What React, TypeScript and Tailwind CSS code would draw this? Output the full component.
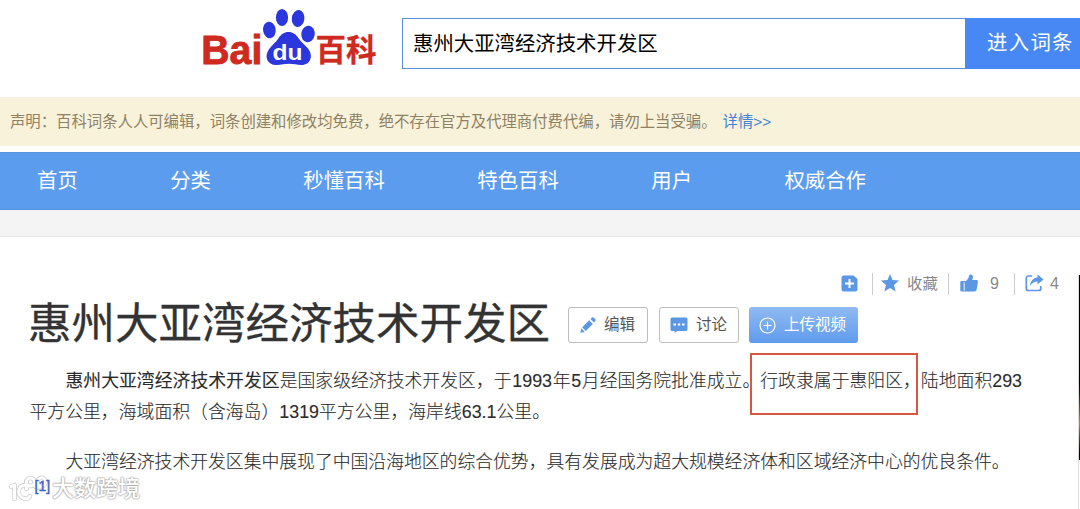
import React from "react";

const NAV = ["首页", "分类", "秒懂百科", "特色百科", "用户", "权威合作"];

function Logo() {
  return (
    <svg width="190" height="90" viewBox="190 0 190 90" className="block shrink-0 overflow-visible" aria-label="Baidu百科">
      <g fill="#cf2a20" stroke="#cf2a20" fontWeight="700">
        <text x="201.300" y="63.600" fontSize="41" strokeWidth="0.9" textLength="61" lengthAdjust="spacingAndGlyphs" fontFamily="'Liberation Sans', sans-serif">Bai</text>
        <text x="315.500" y="61" fontSize="30.500" strokeWidth="0.3" textLength="61" lengthAdjust="spacingAndGlyphs" fontFamily="'Noto Sans CJK SC', sans-serif">百科</text>
      </g>
      <g fill="#2b36dc">
        <ellipse cx="269.400" cy="30" rx="6.300" ry="8.300" transform="rotate(-8 269.400 30)" />
        <ellipse cx="282" cy="17.500" rx="6.100" ry="8.600" />
        <ellipse cx="298.100" cy="18.500" rx="6.300" ry="8.500" transform="rotate(8 298.100 18.500)" />
        <ellipse cx="308" cy="34" rx="6.700" ry="8.300" transform="rotate(8 308 34)" />
        <path d="M288.500 32c4.500 0 7.500 2.400 10 6.200 2.700 4 6.500 6.500 9.500 10.300 5.800 7.500 2.500 16.500-6.500 16.500-4.500 0-8-1.200-12.500-1.200s-8 1.200-12.500 1.200c-9.800 0-12.500-9-7.500-15.800 2.800-3.900 6.800-6.900 9.500-11C281 34.500 284 32 288.500 32z" />
      </g>
      <text x="272.500" y="60" fontSize="22.500" fontWeight="700" fill="#fff" textLength="30" lengthAdjust="spacingAndGlyphs" fontFamily="'Liberation Sans', sans-serif">du</text>
    </svg>
  );
}

function Toolbar() {
  return (
    <div className="flex h-[22px] items-center text-[15.5px] text-[#888]">
      <svg width="17" height="17" viewBox="0 0 17 17" className="mr-[14px] -mt-[2px]">
        <path d="M3 .5h9.500L16.500 4v10a2.500 2.500 0 0 1-2.500 2.500H3A2.500 2.500 0 0 1 .5 14V3A2.500 2.500 0 0 1 3 .5z" fill="#5b97e5" />
        <path d="M8.500 4v9M4 8.500h9" stroke="#fff" strokeWidth="2" />
      </svg>
      <i className="h-[22px] w-px bg-[#ccc]" />
      <svg width="18" height="18" viewBox="0 0 18 18" className="ml-2 -mt-[2px]">
        <path d="M9 0l2.500 6.100 6.500.5-5 4.300 1.600 6.600L9 14l-5.600 3.500L5 10.900 0 6.600l6.500-.5z" fill="#5b97e5" />
      </svg>
      <span className="ml-[8px] w-[41px] text-[15.3px]">收藏</span>
      <i className="h-[22px] w-px bg-[#ccc]" />
      <svg width="18" height="18" viewBox="0 0 18 18" className="ml-[11px] -mt-[2px]" fill="#5b97e5">
        <path d="M1.500 7h4v10.500h-4a1.200 1.200 0 0 1-1.200-1.200V8.200A1.200 1.200 0 0 1 1.500 7z" />
        <path d="M5 7.500C7.500 6.200 8.500 4.300 9 2c.3-2.200 3.600-2 3.900.6.200 1.500-.2 2.600-.7 3.400h4.200c1.400 0 1.800 1 1.500 2.300l-1.300 7.500c-.3 1.200-.9 1.700-2.200 1.700H5z" />
        <path d="M3.700 8.200h.9v8.300h-.9z" fill="#fff" />
      </svg>
      <span className="ml-[12px] w-[24px] text-[16px]">9</span>
      <i className="h-[22px] w-px bg-[#ccc]" />
      <svg width="19" height="18" viewBox="0 0 19 18" className="ml-[10px] -mt-[2px]">
        <path d="M7 2H3A2 2 0 0 0 1.300 4v10.500a2 2 0 0 0 2 2h10.500a2 2 0 0 0 2-2V12" fill="none" stroke="#5b97e5" strokeWidth="1.700" />
        <path d="M12.500.5l6 5-6 5V7.500c-3.500 0-5.600 1.500-7.500 4.700.3-5 3-8.200 7.500-8.700z" fill="#5b97e5" />
      </svg>
      <span className="ml-[6px] text-[16px]">4</span>
    </div>
  );
}

const Pencil = () => (
  <svg width="16" height="16" viewBox="0 0 16 16" fill="#5b97e5">
    <path d="M9.200 3.300l3.600 3.600-7 7-3.600-3.600zM10.500 2L12 .6c.6-.6 1.300-.4 1.900.1l1.400 1.400c.5.600.5 1.200 0 1.800L14 5.500zM1.200 11.300l3.600 3.600-4.400.8z" />
  </svg>
);

const Bubble = () => (
  <svg width="18" height="16" viewBox="0 0 18 16">
    <path d="M2 .5h14A1.500 1.500 0 0 1 17.500 2v10.500a1.500 1.500 0 0 1-1.500 1.500H7.500L4.500 15.800V14H2A1.500 1.500 0 0 1 .5 12.500V2A1.500 1.500 0 0 1 2 .5z" fill="#5b97e5" />
    <path d="M3.500 6.500H6v2H3.500zM7.800 6.500h2.400v2H7.800zM12 6.500h2.500v2H12z" fill="#fff" />
  </svg>
);

function Watermark() {
  const mark = (
    <>
      <path d="M4 13.500l3.500-1.500v14M21 13c-10-4-13 10-4 12.500 3 .8 5-.5 6-2.500" />
      <path d="M19.500 8v8" />
      <circle cx="23.500" cy="9" r="4" />
      <circle cx="34.500" cy="9" r="4.200" />
      <path d="M27 12c2 3 5 3 8 1" />
    </>
  );
  return (
    <div className="absolute top-[473px] left-[7px] flex items-center">
      <svg width="45" height="32" viewBox="0 0 45 32" fill="none" strokeLinecap="round" strokeLinejoin="round">
        <g stroke="#cfcfcf" strokeWidth="4.600">{mark}</g>
        <g stroke="#fff" strokeWidth="3">{mark}</g>
      </svg>
      <span className="text-[22px] leading-8 font-medium whitespace-nowrap text-white [text-shadow:0_0_2px_#999,0_0_2px_#aaa,0_0_1px_#bbb]">大数跨境</span>
    </div>
  );
}

export default function App() {
  return (
    <div className="relative h-[509px] w-[1080px] overflow-hidden bg-white font-['Liberation_Sans','Noto_Sans_CJK_SC',sans-serif]" lang="zh-CN">
      <header className="flex h-[97px] pl-[190px]">
        <Logo />
        <div className="mt-[18px] ml-[22px] flex h-[51px] w-[563px] shrink-0 items-center border border-r-0 border-[#5a8ee0] pt-[2px] pl-[10px] text-[20.4px] text-black">惠州大亚湾经济技术开发区</div>
        <div className="mt-[18px] flex h-[51px] w-[115px] shrink-0 items-center bg-[#4888f5] pl-[22px] text-[20.4px] tracking-[1.3px] whitespace-nowrap text-white">进入词条</div>
      </header>

      <div className="flex h-[49px] items-center bg-[#f8f2db] pl-[10px] text-[15.37px] whitespace-nowrap text-[#8f8163]">
        声明：百科词条人人可编辑，词条创建和修改均免费，绝不存在官方及代理商付费代编，请勿上当受骗。
        <a className="ml-[6px] text-[#3f82d8]">详情&gt;&gt;</a>
      </div>

      <nav className="mt-[6px] flex h-[58px] items-center gap-[92.4px] border-y border-[#5794de] bg-[#5b9cee] pl-[37px] text-[20.4px] text-white">
        {NAV.map((n) => <a key={n}>{n}</a>)}
      </nav>
      <div className="h-[27px] border-b border-[#e6e6e6] bg-[#f4f4f4]" />

      <main className="flex h-[272px] justify-between">
        <div className="w-[1059px] shrink-0">
          <div className="flex justify-end pt-[36px]">
            <Toolbar />
          </div>
          <div className="flex h-[58px] items-start pl-[28px]">
            <h1 className="w-[540px] shrink-0 text-[43.5px] leading-[58px] whitespace-nowrap text-[#333] [-webkit-text-stroke:0.3px_#333]">惠州大亚湾经济技术开发区</h1>
            <div className="mt-[12px] flex text-[15.5px] text-[#555]">
              <a className="flex h-[36px] w-[80px] items-center gap-[8px] rounded-[3px] border border-[#bdbdbd] pl-[11px]"><Pencil />编辑</a>
              <a className="ml-[11px] flex h-[36px] w-[80px] items-center gap-[8px] rounded-[3px] border border-[#bdbdbd] pl-[10px]"><Bubble />讨论</a>
              <a className="ml-[10px] flex h-[36px] w-[109px] items-center gap-[8px] rounded-[3px] bg-linear-to-b from-[#8fbaf3] to-[#5f9bec] pl-[10px] whitespace-nowrap text-white">
                <svg width="17" height="17" viewBox="0 0 17 17" fill="none" stroke="#fff" strokeWidth="1.200">
                  <circle cx="8.500" cy="8.500" r="7.500" />
                  <path d="M8.500 4.500v8M4.500 8.500h8" />
                </svg>
                上传视频
              </a>
            </div>
          </div>
          <article className="pt-[13px] pl-[29.5px] text-[17.85px] leading-[30.5px] font-light whitespace-nowrap text-[#2b2b2b] [-webkit-text-stroke:0.1px_#2b2b2b]">
            <p className="indent-[36px]">
              <b className="font-normal">惠州大亚湾经济技术开发区</b>是国家级经济技术开发区，于<span className="mx-[0.7px]">1993</span>年<span className="mx-[0.7px]">5</span>月经国务院批准成立。行政隶属于惠阳区，陆地面积293
            </p>
            <p>平方公里，海域面积（含海岛）1319平方公里，海岸线63.1公里。</p>
            <p className="mt-[20px] indent-[36px] tracking-[-0.03px]">大亚湾经济技术开发区集中展现了中国沿海地区的综合优势，具有发展成为超大规模经济体和区域经济中心的优良条件。</p>
            <p className="relative z-10 mt-[-1px] pl-[5px] text-[14px] leading-[18px] font-normal text-[#3a62c4] [-webkit-text-stroke:0.4px_#3a62c4]">[1]</p>
          </article>
        </div>
        <aside className="mt-[38px] w-[2px] border-l border-[#ddd]">
          <div className="h-[185px] bg-linear-to-b from-black from-55% via-[#a58a70] via-80% to-black" />
        </aside>
      </main>

      <div className="absolute top-[353px] left-[750px] h-[62px] w-[168px] border-2 border-[#d9573f]" />
      <Watermark />
    </div>
  );
}
